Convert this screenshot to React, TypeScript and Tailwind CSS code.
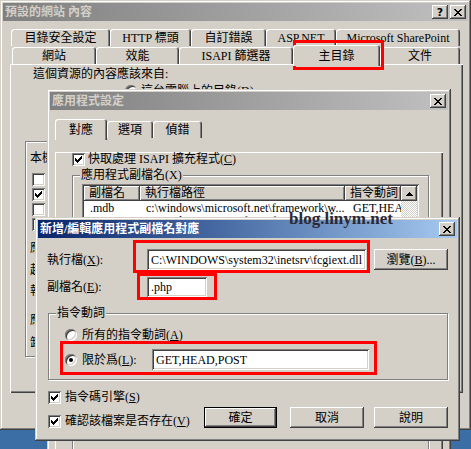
import React from "react";

const FONT = "font-['Liberation_Serif','Noto_Sans_CJK_TC',serif]";
const RAISED = "shadow-[inset_-1px_-1px_#404040,inset_1px_1px_#ffffff,inset_-2px_-2px_#808080,inset_2px_2px_#d4d0c8]";
const FRAME = "shadow-[inset_-1px_-1px_#404040,inset_1px_1px_#d4d0c8,inset_-2px_-2px_#808080,inset_2px_2px_#ffffff]";
const SUNKEN = "shadow-[inset_1px_1px_#808080,inset_-1px_-1px_#ffffff,inset_2px_2px_#404040,inset_-2px_-2px_#d4d0c8]";
const PANEL = "shadow-[inset_1px_1px_#ffffff,inset_-1px_-1px_#404040,inset_-2px_-2px_#808080]";
const ETCHED = "border border-[#808080] shadow-[inset_1px_1px_#ffffff,1px_1px_#ffffff]";

const CHECK = ["......x", ".....xx", "x...xxx", "xx.xxx.", "xxxxx..", ".xxx...", "..x...."];
const CROSS = ["xx....xx", ".xx..xx.", "..xxxx..", "...xx...", "..xxxx..", ".xx..xx.", "xx....xx"];
const UP = ["...x...", "..xxx..", ".xxxxx.", "xxxxxxx"];

function Bitmap({ rows }: { rows: string[] }) {
  return (
    <svg width={rows[0].length} height={rows.length} shapeRendering="crispEdges">
      {rows.flatMap((r, y) =>
        r.split("").map((c, x) =>
          c === "x" ? <rect key={`${x}-${y}`} x={x} y={y} width={1} height={1} fill="#000" /> : null
        )
      )}
    </svg>
  );
}

function TitleBtn({ children }: { children: React.ReactNode }) {
  return (
    <div className={`w-[16px] h-[14px] bg-[#d4d0c8] ${RAISED} flex items-center justify-center`}>{children}</div>
  );
}

function Win({
  title,
  active,
  help,
  className,
  children,
}: {
  title: string;
  active?: boolean;
  help?: boolean;
  className: string;
  children: React.ReactNode;
}) {
  return (
    <div className={`absolute bg-[#d4d0c8] p-[3px] ${FRAME} ${className}`}>
      <div
        className={`h-[18px] flex items-center pl-[2px] pr-[2px] ${
          active
            ? "bg-linear-to-r from-[#0a246a] to-[#a6caf0] text-white"
            : "bg-linear-to-r from-[#808080] to-[#c0c0c0] text-[#d4d0c8]"
        }`}
      >
        <span className="flex-1 font-bold whitespace-nowrap">{title}</span>
        {help && (
          <div className="mr-[2px]">
            <TitleBtn>
              <span className="font-['DejaVu_Sans'] font-bold text-[11px] leading-none text-black">?</span>
            </TitleBtn>
          </div>
        )}
        <TitleBtn>
          <Bitmap rows={CROSS} />
        </TitleBtn>
      </div>
      {children}
    </div>
  );
}

function Tab({ label, w, selected }: { label: string; w: string; selected?: boolean }) {
  return (
    <div
      className={`relative shrink-0 flex justify-center whitespace-nowrap rounded-t-[3px] bg-[#d4d0c8] shadow-[inset_1px_1px_#ffffff,inset_-1px_0_#404040,inset_-2px_0_#808080] ${w} ${
        selected ? "z-10 h-[21px] -mb-[2px] pt-[4px]" : "h-[17px] pt-[2px]"
      }`}
    >
      {label}
    </div>
  );
}

function Check({ on }: { on?: boolean }) {
  return (
    <div className={`w-[13px] h-[13px] shrink-0 bg-white ${SUNKEN} flex items-center justify-center`}>
      {on && <Bitmap rows={CHECK} />}
    </div>
  );
}

function Radio({ on }: { on?: boolean }) {
  return (
    <div
      className={`w-[12px] h-[12px] shrink-0 rounded-full bg-white ${SUNKEN} flex items-center justify-center`}
    >
      {on && <div className="w-[4px] h-[4px] rounded-full bg-black" />}
    </div>
  );
}

function Btn({ children, def, className }: { children: React.ReactNode; def?: boolean; className: string }) {
  if (def)
    return (
      <div className={`border border-black ${className}`}>
        <div className={`h-full flex items-center justify-center ${RAISED}`}>{children}</div>
      </div>
    );
  return <div className={`flex items-center justify-center ${RAISED} ${className}`}>{children}</div>;
}

function Field({ className, children }: { className: string; children?: React.ReactNode }) {
  return (
    <div className={`bg-white ${SUNKEN} flex items-center pl-[4px] whitespace-nowrap overflow-hidden ${className}`}>
      {children}
    </div>
  );
}

function Group({ label, className, children }: { label?: string; className: string; children?: React.ReactNode }) {
  return (
    <div className={`relative ${ETCHED} ${className}`}>
      {label && <span className="absolute -top-[8px] left-[7px] bg-[#d4d0c8] px-[1px] whitespace-nowrap">{label}</span>}
      {children}
    </div>
  );
}

const ROW1 = [
  { label: "目錄安全設定", w: "w-[99px]" },
  { label: "HTTP 標頭", w: "w-[81px]" },
  { label: "自訂錯誤", w: "w-[75px]" },
  { label: "ASP.NET", w: "w-[70px]" },
  { label: "Microsoft SharePoint", w: "w-[124px]" },
];

const ROW2 = [
  { label: "網站", w: "w-[84px]" },
  { label: "效能", w: "w-[83px]" },
  { label: "ISAPI 篩選器", w: "w-[114px]" },
  { label: "主目錄", w: "w-[87px]", selected: true },
  { label: "文件", w: "w-[80px]" },
];

const EXTS = [
  { ext: ".mdb", path: "c:\\windows\\microsoft.net\\framework\\w...", verbs: "GET,HEA." },
  { ext: ".asax", path: "c:\\windows\\microsoft.net\\framework\\w...", verbs: "GET,HEA." },
  { ext: ".ascx", path: "c:\\windows\\microsoft.net\\framework\\w...", verbs: "GET,HEA." },
];

export default function App() {
  return (
    <div className={`relative w-[471px] h-[449px] overflow-hidden bg-[#3a6ea5] text-[12px] leading-[14px] text-black ${FONT}`}>
      {/* 預設的網站 內容 */}
      <Win className="left-0 top-0 w-[471px] h-[430px]" title="預設的網站 內容" help>
        <div className="mt-[8px] ml-[8px] flex h-[18px]">
          {ROW1.map((t) => (
            <Tab key={t.label} label={t.label} w={t.w} />
          ))}
        </div>
        <div className="ml-[9px] flex items-end h-[17px]">
          {ROW2.map((t) => (
            <Tab key={t.label} label={t.label} w={t.w} selected={t.selected} />
          ))}
        </div>
        <div className={`ml-[7px] w-[453px] h-[329px] ${PANEL}`}>
          <div className="pl-[23px] pt-[3px]">這個資源的內容應該來自:</div>
          <div className="ml-[115px] mt-[3px] flex flex-col gap-[4px]">
            <div className="flex items-center gap-[4px] h-[14px]">
              <Radio on />
              <span>這台電腦上的目錄(<u>D</u>)</span>
            </div>
            <div className="flex items-center gap-[4px] h-[14px]">
              <Radio />
              <span>另一部電腦上的共用(<u>S</u>)</span>
            </div>
            <div className="flex items-center gap-[4px] h-[14px]">
              <Radio />
              <span>重新導向至 URL(<u>U</u>)</span>
            </div>
          </div>
          <Group className="ml-[15px] mt-[7px] w-[420px] h-[216px]">
            <div className="pl-[4px] pt-[9px]">本機路徑(<u>C</u>):</div>
            <div className="ml-[6px] mt-[7px] flex flex-col gap-[1px]">
              {[
                { l: "指令碼來源存取(T)", on: false },
                { l: "讀取(R)", on: true },
                { l: "寫入(W)", on: false },
                { l: "目錄瀏覽(B)", on: false },
              ].map((c) => (
                <div key={c.l} className="flex items-center gap-[4px] h-[14px]">
                  <Check on={c.on} />
                  <span>{c.l}</span>
                </div>
              ))}
            </div>
            <div className="pl-[4px] mt-[10px]">應用程式名稱(M):</div>
            <div className="pl-[4px] mt-[8px]">起始點:</div>
            <div className="pl-[4px] mt-[7px]">執行權限(P):</div>
            <div className="pl-[4px] mt-[15px]">應用程式集區(N):</div>
            <div className="pl-[4px] mt-[9px]">卸載(L)</div>
          </Group>
        </div>
      </Win>

      {/* 應用程式設定 */}
      <Win className="left-[47px] top-[89px] w-[404px] h-[380px]" title="應用程式設定">
        <div className="mt-[11px] ml-[5px] flex items-end h-[17px]">
          <Tab label="對應" w="w-[52px]" selected />
          <Tab label="選項" w="w-[46px]" />
          <Tab label="偵錯" w="w-[49px]" />
        </div>
        <div className={`ml-[5px] w-[388px] h-[320px] ${PANEL}`}>
          <div className="flex items-center gap-[3px] h-[14px] ml-[17px] mt-[14px]">
            <Check on />
            <span>快取處理 ISAPI 擴充程式(<u>C</u>)</span>
          </div>
          <Group label="應用程式副檔名(X)" className="ml-[17px] mt-[9px] w-[357px] h-[280px]">
            <div className={`ml-[9px] mt-[8px] w-[337px] h-[240px] bg-white p-[2px] flex ${SUNKEN}`}>
              <div className="w-[317px]">
                <div className="flex h-[15px]">
                  <div className={`w-[56px] pl-[5px] bg-[#d4d0c8] ${RAISED}`}>副檔名</div>
                  <div className={`w-[205px] pl-[5px] bg-[#d4d0c8] ${RAISED}`}>執行檔路徑</div>
                  <div className={`w-[56px] pl-[5px] bg-[#d4d0c8] ${RAISED}`}>指令動詞</div>
                </div>
                {EXTS.map((r) => (
                  <div key={r.ext} className="flex h-[13px] whitespace-nowrap">
                    <div className="w-[56px] pl-[6px]">{r.ext}</div>
                    <div className="w-[205px] pl-[6px] overflow-hidden">{r.path}</div>
                    <div className="w-[56px] pl-[8px] overflow-hidden">{r.verbs}</div>
                  </div>
                ))}
              </div>
              <div className="w-[16px] flex flex-col">
                <div className={`h-[15px] bg-[#d4d0c8] flex items-center justify-center ${RAISED}`}>
                  <Bitmap rows={UP} />
                </div>
                <div className="flex-1 bg-[repeating-conic-gradient(#ffffff_0%_25%,#d4d0c8_0%_50%)] bg-size-[2px_2px]" />
              </div>
            </div>
          </Group>
        </div>
      </Win>

      {/* 新增/編輯應用程式副檔名對應 */}
      <Win active className="left-[35px] top-[217px] w-[425px] h-[224px]" title="新增/編輯應用程式副檔名對應">
        <div className="mt-[11px] pl-[9px] flex items-center">
          <span className="w-[100px] shrink-0">
            執行檔(<u>X</u>):
          </span>
          <Field className="w-[219px] h-[21px]">{"C:\\WINDOWS\\system32\\inetsrv\\fcgiext.dll"}</Field>
          <Btn className="ml-[8px] w-[74px] h-[21px]">
            瀏覽(<u>B</u>)...
          </Btn>
        </div>
        <div className="mt-[7px] pl-[9px] flex items-center">
          <span className="w-[100px] shrink-0">
            副檔名(<u>E</u>):
          </span>
          <Field className="w-[60px] h-[20px]">.php</Field>
        </div>
        <Group label="指令動詞" className="ml-[10px] mt-[16px] w-[400px] h-[67px]">
          <div className="pl-[16px] pt-[14px] flex items-center gap-[5px] h-[28px]">
            <Radio />
            <span>所有的指令動詞(<u>A</u>)</span>
          </div>
          <div className="pl-[16px] mt-[7px] flex items-center gap-[5px] h-[21px]">
            <Radio on />
            <span className="w-[65px] shrink-0">
              限於爲(<u>L</u>):
            </span>
            <Field className="w-[217px] h-[21px]">GET,HEAD,POST</Field>
          </div>
        </Group>
        <div className="ml-[10px] mt-[10px] flex items-center gap-[4px] h-[14px]">
          <Check on />
          <span>指令碼引擎(<u>S</u>)</span>
        </div>
        <div className="mt-[3px] flex items-start">
          <div className="ml-[10px] mt-[7px] flex items-center gap-[4px] h-[14px]">
            <Check on />
            <span>確認該檔案是否存在(<u>V</u>)</span>
          </div>
          <div className="ml-auto mr-[9px] flex">
            <Btn def className="w-[73px] h-[21px]">
              確定
            </Btn>
            <Btn className="ml-[13px] w-[74px] h-[21px]">取消</Btn>
            <Btn className="ml-[10px] w-[74px] h-[21px]">說明</Btn>
          </div>
        </div>
      </Win>

      {/* red annotation boxes */}
      <div className="absolute left-[293px] top-[40px] w-[91px] h-[30px] border-[3px] border-[#ff0000]" />
      <div className="absolute left-[133px] top-[240px] w-[237px] h-[33px] border-[3px] border-[#ff0000]" />
      <div className="absolute left-[137px] top-[273px] w-[80px] h-[27px] border-[3px] border-[#ff0000]" />
      <div className="absolute left-[60px] top-[341px] w-[317px] h-[34px] border-[3px] border-[#ff0000]" />

      {/* watermark */}
      <div className="absolute left-[289px] top-[209px] font-['Liberation_Serif',serif] font-bold text-[17px] leading-[20px] text-[#2a2a36] whitespace-nowrap">
        blog.linym.net
      </div>
    </div>
  );
}
